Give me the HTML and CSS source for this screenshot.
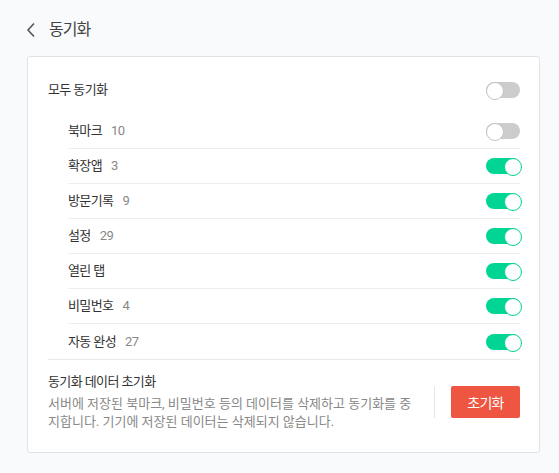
FILE: index.html
```html
<!DOCTYPE html>
<html lang="ko">
<head>
<meta charset="utf-8">
<title>동기화</title>
<link rel="stylesheet" href="styles.css">
</head>
<body>
<header class="header">
  <svg class="back" width="10" height="16" viewBox="0 0 10 16"><path d="M8 1.5 L2 8 L8 14.5" fill="none" stroke="#555" stroke-width="1.6"/></svg>
  <h1 class="title">동기화</h1>
</header>
<main class="card">
  <div class="row row-all">
    <span class="label">모두 동기화</span>
    <span class="toggle"></span>
  </div>
  <ul class="list">
    <li class="row item"><span class="label">북마크<span class="count">10</span></span><span class="toggle"></span></li>
    <li class="row item"><span class="label">확장앱<span class="count">3</span></span><span class="toggle on"></span></li>
    <li class="row item"><span class="label">방문기록<span class="count">9</span></span><span class="toggle on"></span></li>
    <li class="row item"><span class="label">설정<span class="count">29</span></span><span class="toggle on"></span></li>
    <li class="row item"><span class="label">열린 탭</span><span class="toggle on"></span></li>
    <li class="row item"><span class="label">비밀번호<span class="count">4</span></span><span class="toggle on"></span></li>
    <li class="row item"><span class="label">자동 완성<span class="count">27</span></span><span class="toggle on"></span></li>
  </ul>
  <section class="reset">
    <div class="reset-text">
      <h2 class="reset-title">동기화 데이터 초기화</h2>
      <p class="reset-desc">서버에 저장된 북마크, 비밀번호 등의 데이터를 삭제하고 동기화를 중지합니다. 기기에 저장된 데이터는 삭제되지 않습니다.</p>
    </div>
    <span class="divider"></span>
    <button class="reset-btn">초기화</button>
  </section>
</main>
</body>
</html>
```

FILE: styles.css
```css
* { box-sizing: border-box; }
html, body { margin: 0; padding: 0; }
body {
  background: #f9fafb;
  font-family: Roboto, "Noto Sans CJK KR", sans-serif;
  font-size: 13px;
  color: #333;
  letter-spacing: -0.6px;
}
.header {
  display: flex;
  align-items: center;
  height: 20px;
  margin: 20px 0 16px 26px;
}
.back { display: block; margin-right: 13px; }
.title {
  margin: 0;
  font-size: 16px;
  font-weight: 400;
  color: #444;
  letter-spacing: -1px;
  line-height: 20px;
}
.card {
  margin: 0 19px 0 27px;
  background: #fff;
  border: 1px solid #dfe3e8;
  border-radius: 3px;
  padding: 15px 19px 0 20px;
}
.row {
  display: flex;
  align-items: center;
  justify-content: space-between;
}
.row-all { height: 35px; }
.list {
  list-style: none;
  margin: 7px 0 0;
  padding: 0 0 0 20px;
  border-bottom: 1px solid #e6e8eb;
}
.item {
  height: 35px;
  border-bottom: 1px solid #eceef0;
}
.item:last-child { border-bottom: none; }
.label { color: #333; line-height: 18px; }
.count { color: #888; margin-left: 9px; }
.toggle {
  position: relative;
  width: 34px;
  height: 16px;
  border-radius: 8px;
  background: #cccccc;
  flex: none;
}
.toggle::after {
  content: "";
  position: absolute;
  left: 0;
  top: 0;
  width: 16px;
  height: 16px;
  border-radius: 50%;
  background: #fff;
  border: 1px solid #c4c4c4;
}
.toggle.on { background: #00d594; }
.toggle.on::after { left: 18px; border-color: #00d594; }
.reset {
  display: flex;
  align-items: center;
  padding: 13px 0 21px;
}
.reset-text { flex: 1; }
.reset-title {
  margin: 0 0 4px;
  font-size: 13px;
  font-weight: 400;
  line-height: 18px;
  color: #333;
}
.reset-desc {
  margin: 0;
  line-height: 18px;
  color: #888;
  letter-spacing: 0;
}
.divider {
  width: 1px;
  height: 32px;
  background: #e8e8e8;
  margin: 0 16px 0 16px;
  flex: none;
}
.reset-btn {
  width: 69px;
  height: 32px;
  border: none;
  border-radius: 2px;
  background: #ef5641;
  color: #fff;
  font-family: Roboto, "Noto Sans CJK KR", sans-serif;
  font-size: 14px;
  letter-spacing: -0.7px;
  flex: none;
  padding: 0;
}
```
